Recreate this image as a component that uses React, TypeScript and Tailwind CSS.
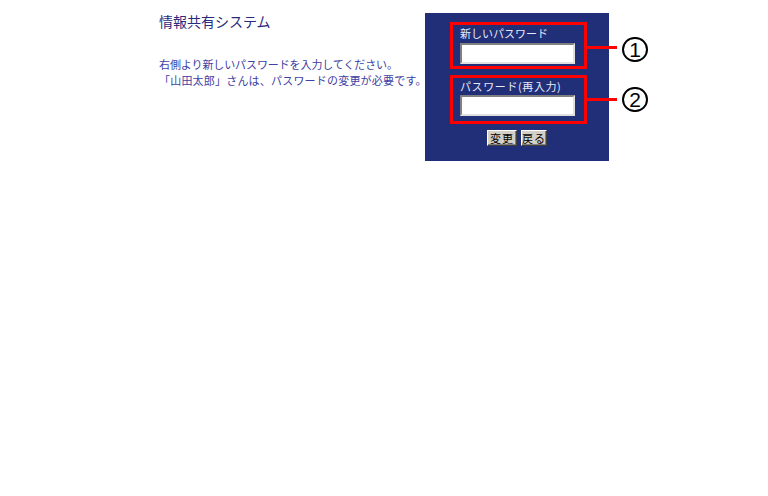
import React from "react";

const jp = { fontFamily: '"Noto Sans CJK JP", "Noto Sans", sans-serif' };

function Btn({ children, w }: { children: React.ReactNode; w: string }) {
  return (
    <button
      className={`${w} h-[16px] bg-[#d4d0c8] border border-t-white border-l-white border-b-[#404040] border-r-[#404040] text-[11px] leading-[14px] text-black flex items-center justify-center tracking-[1px] shadow-[inset_-1px_-1px_0_#808080]`}
      style={jp}
    >
      {children}
    </button>
  );
}

export default function App() {
  return (
    <div className="relative w-[768px] h-[496px] bg-white overflow-hidden" style={jp}>
      <div className="flex pl-[159px] pt-[13px]">
        <div className="w-[266px] flex flex-col">
          <div className="text-[14px] leading-[16px] text-[#2a2a7c] h-[16px]">情報共有システム</div>
          <div className="mt-[27px] text-[11px] leading-[16px] text-[#4040a4] whitespace-nowrap">
            <div className="tracking-[-0.1px]">右側より新しいパスワードを入力してください。</div>
            <div className="tracking-[0.2px]">「山田太郎」さんは、パスワードの変更が必要です。</div>
          </div>
        </div>
        <div className="w-[184px] h-[148px] bg-[#212f78] flex flex-col pl-[25px] pt-[9px]">
          <div className="w-[137px] h-[47px] border-[3px] border-[#ff0000] flex flex-col pl-[7px]">
            <div className="h-[16px] text-[11px] leading-[16px] text-[#e8e8f8] whitespace-nowrap">新しいパスワード</div>
            <div className="mt-[2px] w-[115px] h-[21px] bg-white border-2 border-t-[#808080] border-l-[#808080] border-b-[#e0e0e0] border-r-[#e0e0e0]" />
          </div>
          <div className="mt-[6px] w-[137px] h-[49px] border-[3px] border-[#ff0000] flex flex-col pl-[7px]">
            <div className="h-[16px] text-[11px] leading-[16px] text-[#e8e8f8] whitespace-nowrap tracking-[0.6px]">パスワード(再入力)</div>
            <div className="mt-[1px] w-[115px] h-[21px] bg-white border-2 border-t-[#808080] border-l-[#808080] border-b-[#e0e0e0] border-r-[#e0e0e0]" />
          </div>
          <div className="mt-[6px] flex gap-[4px] pl-[37px]">
            <Btn w="w-[30px]">変更</Btn>
            <Btn w="w-[26px]">戻る</Btn>
          </div>
        </div>
      </div>

      {/* annotations */}
      <div className="absolute left-[587px] top-[46px] w-[30px] h-[3px] bg-[#ff0000]" />
      <div className="absolute left-[587px] top-[98px] w-[30px] h-[3px] bg-[#ff0000]" />
      <div
        className="absolute left-[622px] top-[37px] w-[26px] h-[25px] rounded-full border-2 border-black flex items-center justify-center text-[21px] leading-none text-black"
        style={{ fontFamily: '"Liberation Sans", Arial, sans-serif' }}
      >
        1
      </div>
      <div
        className="absolute left-[622px] top-[87px] w-[26px] h-[25px] rounded-full border-2 border-black flex items-center justify-center text-[21px] leading-none text-black"
        style={{ fontFamily: '"Liberation Sans", Arial, sans-serif' }}
      >
        2
      </div>
    </div>
  );
}
